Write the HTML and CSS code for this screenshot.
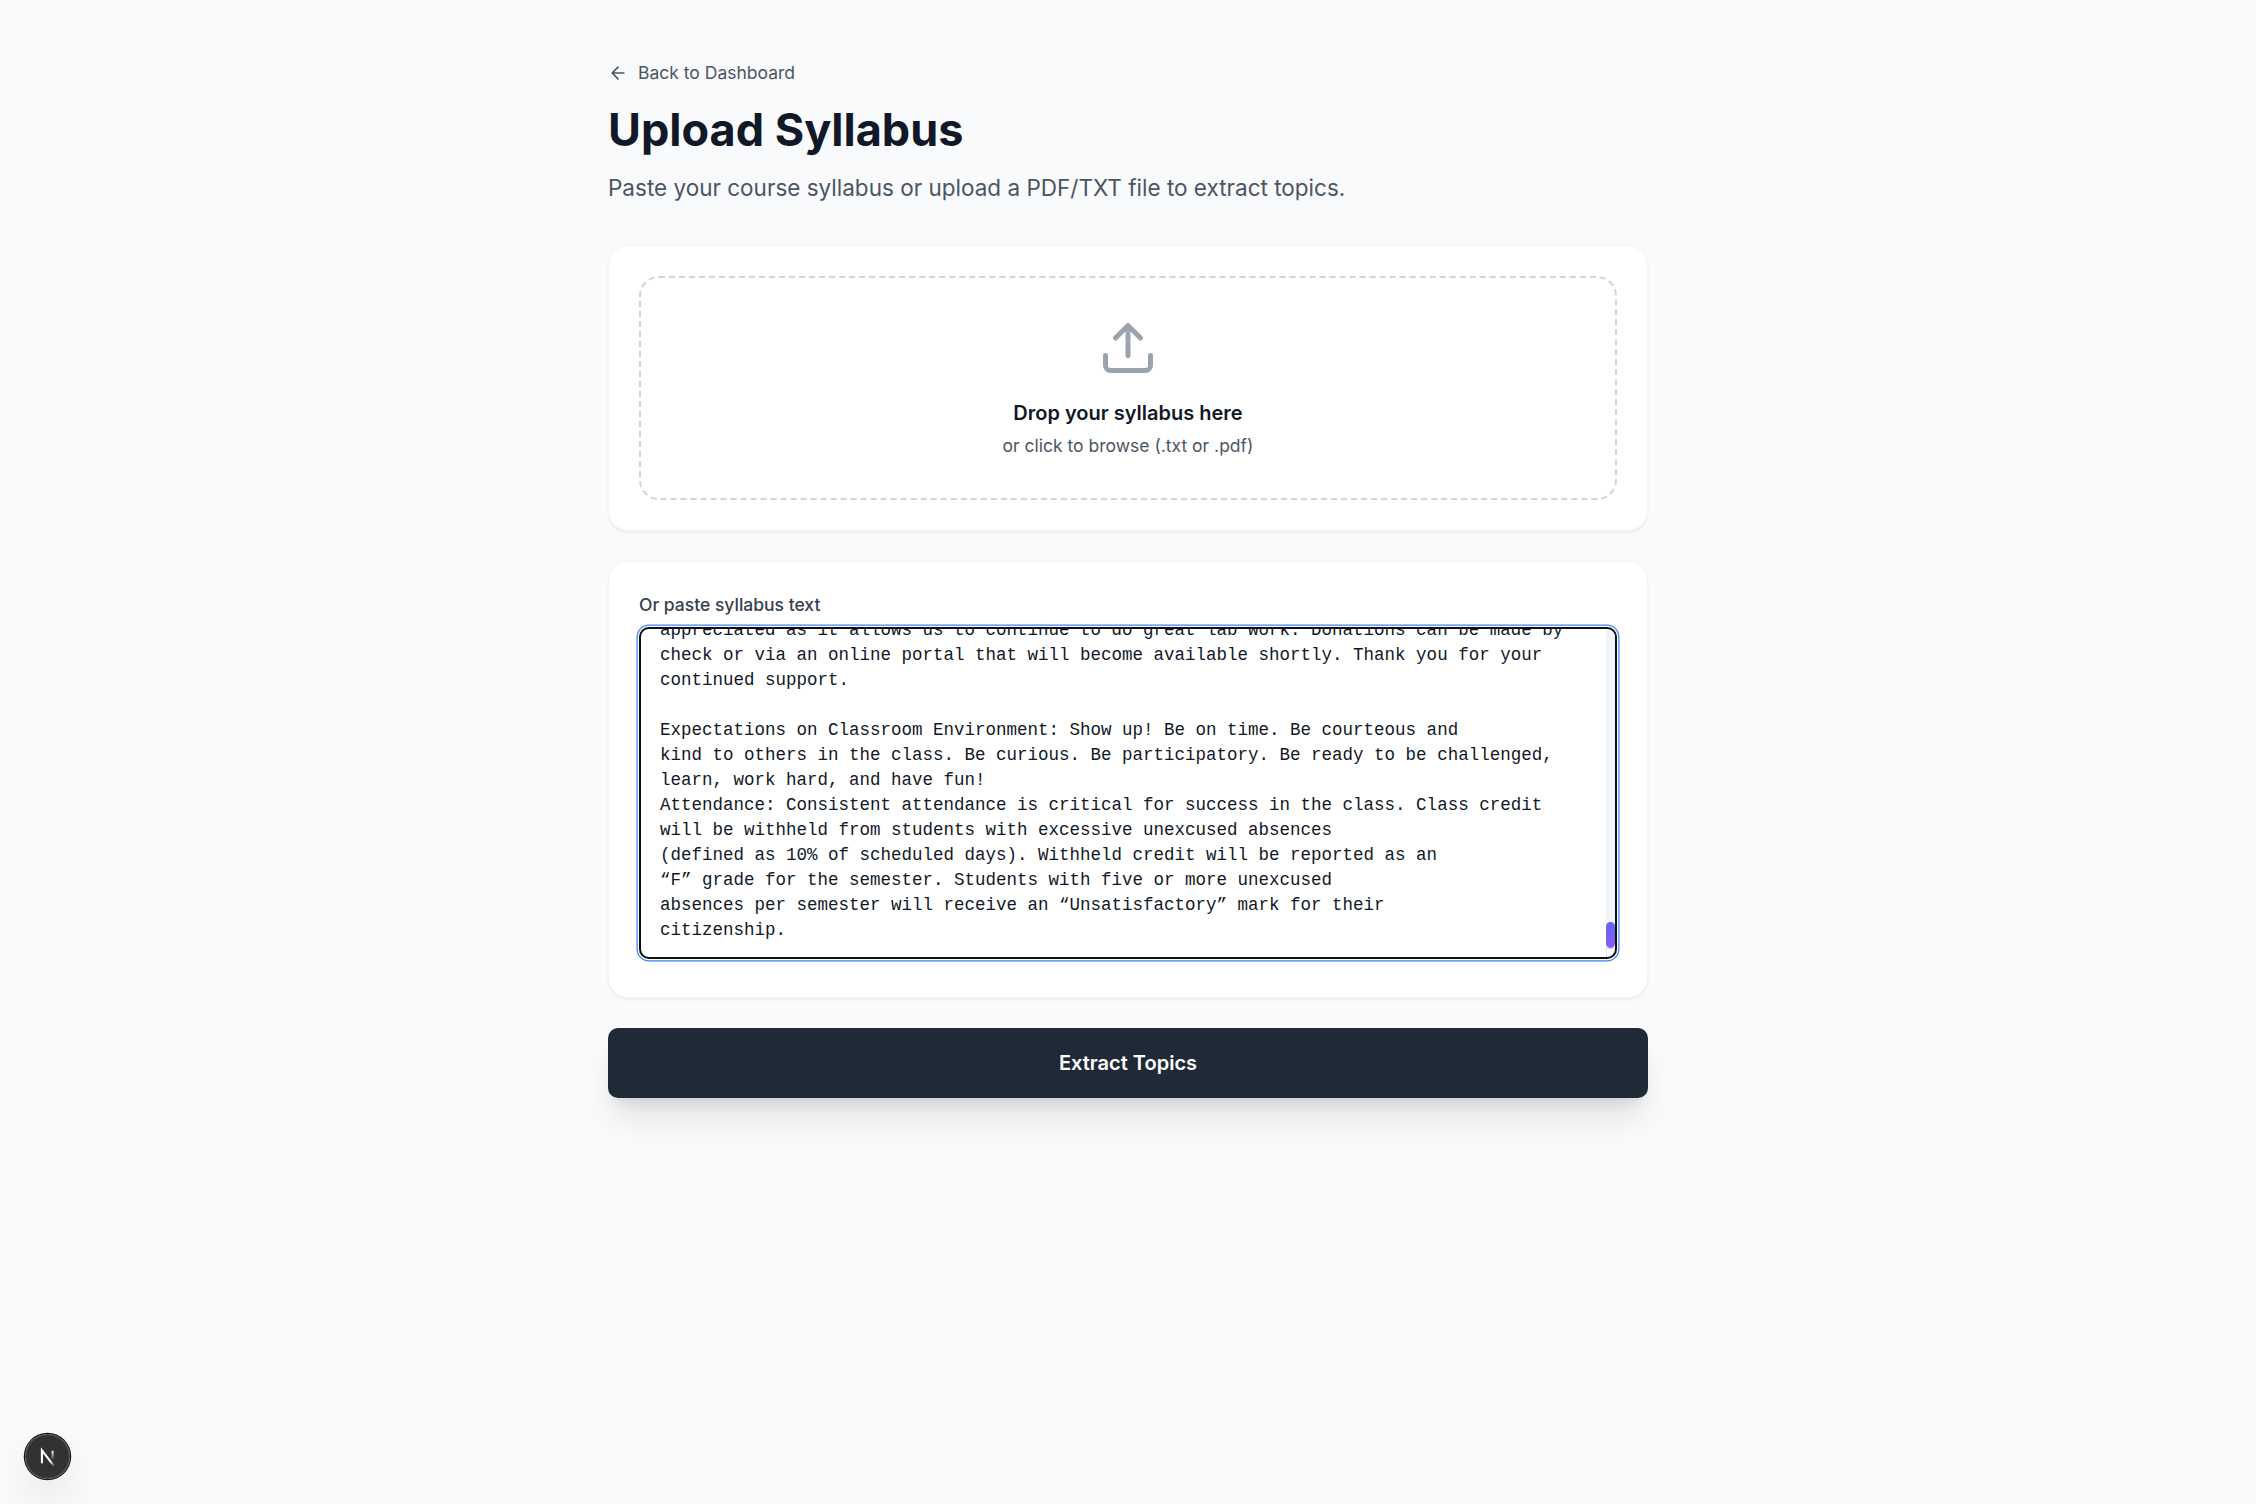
FILE: index.html
```html
<!DOCTYPE html>
<html lang="en">
<head>
  <meta charset="utf-8">
  <meta name="viewport" content="width=device-width, initial-scale=1">
  <title>Upload Syllabus</title>
  <link rel="stylesheet" href="styles.css">
</head>
<body>
  <main class="page">
    <header class="page-header">
      <a class="back-link" href="#">
        <svg class="back-icon" viewBox="0 0 24 24" aria-hidden="true"><path d="m12 19-7-7 7-7M19 12H5"/></svg>
        Back to Dashboard
      </a>
      <h1 class="title">Upload Syllabus</h1>
      <p class="subtitle">Paste your course syllabus or upload a PDF/TXT file to extract topics.</p>
    </header>

    <section class="card">
      <button class="dropzone" type="button">
        <svg class="upload-icon" viewBox="0 0 24 24" aria-hidden="true"><path d="M21 15v4a2 2 0 0 1-2 2H5a2 2 0 0 1-2-2v-4"/><path d="m17 8-5-5-5 5M12 3v12"/></svg>
        <span class="drop-title">Drop your syllabus here</span>
        <span class="drop-hint">or click to browse (.txt or .pdf)</span>
      </button>
    </section>

    <section class="card">
      <label class="field-label" for="syllabus">Or paste syllabus text</label>
      <div class="field-box">
        <textarea class="field" id="syllabus" rows="12" spellcheck="false">appreciated as it allows us to continue to do great lab work. Donations can be made by check or via an online portal that will become available shortly. Thank you for your continued support.

Expectations on Classroom Environment: Show up! Be on time. Be courteous and
kind to others in the class. Be curious. Be participatory. Be ready to be challenged, learn, work hard, and have fun!
Attendance: Consistent attendance is critical for success in the class. Class credit will be withheld from students with excessive unexcused absences
(defined as 10% of scheduled days). Withheld credit will be reported as an
“F” grade for the semester. Students with five or more unexcused
absences per semester will receive an “Unsatisfactory” mark for their
citizenship.</textarea>
        <div class="scrollbar" aria-hidden="true">
          <div class="scrollbar-track"><div class="scrollbar-thumb"></div></div>
          <div class="scrollbar-corner"></div>
        </div>
      </div>
    </section>

    <button class="submit" type="button">Extract Topics</button>
  </main>

  <button class="dev-badge" type="button" aria-label="Open developer tools">
    <svg class="dev-logo" viewBox="0 0 40 40" aria-hidden="true">
      <defs>
        <linearGradient id="diagonal" gradientUnits="userSpaceOnUse" x1="9.95555" y1="11.1226" x2="15.4778" y2="17.9671">
          <stop stop-color="#fff"/><stop offset="0.604" stop-color="#fff" stop-opacity="0"/>
        </linearGradient>
        <linearGradient id="stem" gradientUnits="userSpaceOnUse" x1="11.8222" y1="1.40039" x2="11.791" y2="9.62542">
          <stop stop-color="#fff"/><stop offset="1" stop-color="#fff" stop-opacity="0"/>
        </linearGradient>
      </defs>
      <g transform="translate(12.7 13.5)" fill="none" stroke-width="1.86">
        <path stroke="url(#diagonal)" d="M13.3 15.2 2.34 1v11.6"/>
        <path stroke="url(#stem)" d="M11.825 1.5v11.6"/>
      </g>
    </svg>
  </button>
  <script src="script.js"></script>
</body>
</html>
```
FILE: styles.css
```css
/* The interface is laid out on a 16px base and shown at 125%. */
html {
  zoom: 1.25;
}

*,
*::before,
*::after {
  box-sizing: border-box;
}

body {
  margin: 0;
  background: #f9fafc;
  color: #111827;
  font-family: Inter, "Liberation Sans", sans-serif;
  font-size: 16px;
  line-height: 24px;
}

button {
  font: inherit;
  color: inherit;
  cursor: pointer;
}

.page {
  display: flex;
  flex-direction: column;
  gap: 24px;
  max-width: 896px;
  margin: 0 auto;
  padding: 48px 32px;
}

.page-header {
  display: flex;
  flex-direction: column;
  align-items: flex-start;
  margin-bottom: 8px;
}

.back-link {
  display: inline-flex;
  align-items: center;
  gap: 8px;
  margin-bottom: 16px;
  color: #4b5563;
  font-size: 14px;
  line-height: 20px;
  text-decoration: none;
}

.back-icon,
.upload-icon {
  fill: none;
  stroke: currentColor;
  stroke-width: 2;
  stroke-linecap: round;
  stroke-linejoin: round;
}

.back-icon {
  width: 16px;
  height: 16px;
}

.title {
  margin: 0 0 12px;
  font-size: 36px;
  font-weight: 700;
  line-height: 40px;
}

.subtitle {
  margin: 0;
  color: #4b5563;
  font-size: 18px;
  line-height: 28px;
}

.card {
  padding: 24px;
  background: #fff;
  border: 1px solid #f3f4f6;
  border-radius: 16px;
  box-shadow: 0 1px 2px rgb(0 0 0 / 5%);
}

.dropzone {
  display: flex;
  flex-direction: column;
  align-items: center;
  width: 100%;
  padding: 32px;
  background: transparent;
  border: 2px dashed #d1d5db;
  border-radius: 16px;
}

.upload-icon {
  width: 48px;
  height: 48px;
  margin-bottom: 16px;
  color: #9ca3af;
}

.drop-title {
  margin-bottom: 4px;
  font-weight: 600;
}

.drop-hint {
  color: #4b5563;
  font-size: 14px;
  line-height: 20px;
}

.field-label {
  display: block;
  margin-bottom: 8px;
  color: #374151;
  font-size: 14px;
  font-weight: 500;
  line-height: 20px;
}

.field-box {
  display: flex;
  position: relative;
  margin-bottom: 6px;
}

.field {
  width: 100%;
  padding: 12px 24px 12px 16px;
  background: #fff;
  border: 1px solid #d1d5db;
  border-radius: 8px;
  outline: 2px solid #101014;
  outline-offset: -2px;
  box-shadow: 0 0 0 1px #fff, 0 0 0 2px #3b82f6;
  color: #111827;
  font-family: "Liberation Mono", monospace;
  font-size: 14px;
  line-height: 20px;
  resize: none;
  scrollbar-width: none;
}

.scrollbar {
  display: flex;
  flex-direction: column;
  position: absolute;
  top: 2px;
  right: 2px;
  bottom: 2px;
  width: 7px;
  overflow: hidden;
  border-radius: 0 6px 6px 0;
  pointer-events: none;
}

.scrollbar-track {
  display: flex;
  flex: 1;
  flex-direction: column;
  justify-content: flex-end;
  background: #f1f5f9;
}

.scrollbar-thumb {
  height: 21px;
  background: linear-gradient(#6366f1, #8b5cf6);
  border-radius: 4px;
}

.scrollbar-corner {
  height: 7px;
  border-top: 1px solid #dcdcdc;
  border-left: 1px solid #dcdcdc;
}

.submit {
  padding: 16px 24px;
  background: #1f2937;
  border: 0;
  border-radius: 8px;
  box-shadow: 0 20px 25px -5px rgb(0 0 0 / 10%), 0 8px 10px -6px rgb(0 0 0 / 10%);
  color: #fff;
  font-weight: 600;
}

.dev-badge {
  position: fixed;
  bottom: 20px;
  left: 20px;
  width: 36px;
  height: 36px;
  padding: 0;
  background: rgb(0 0 0 / 80%);
  border: 0;
  border-radius: 50%;
  box-shadow: 0 0 0 1px #171717, inset 0 0 0 1px rgb(255 255 255 / 14%), 0 16px 32px -8px rgb(0 0 0 / 24%);
}

.dev-logo {
  display: block;
  width: 36px;
  height: 36px;
}
```
FILE: script.js
```js
// Room for the earlier part of the syllabus, then show its end.
const field = document.getElementById("syllabus");
field.value = "\n".repeat(150) + field.value;
field.scrollTop = field.scrollHeight;
```
